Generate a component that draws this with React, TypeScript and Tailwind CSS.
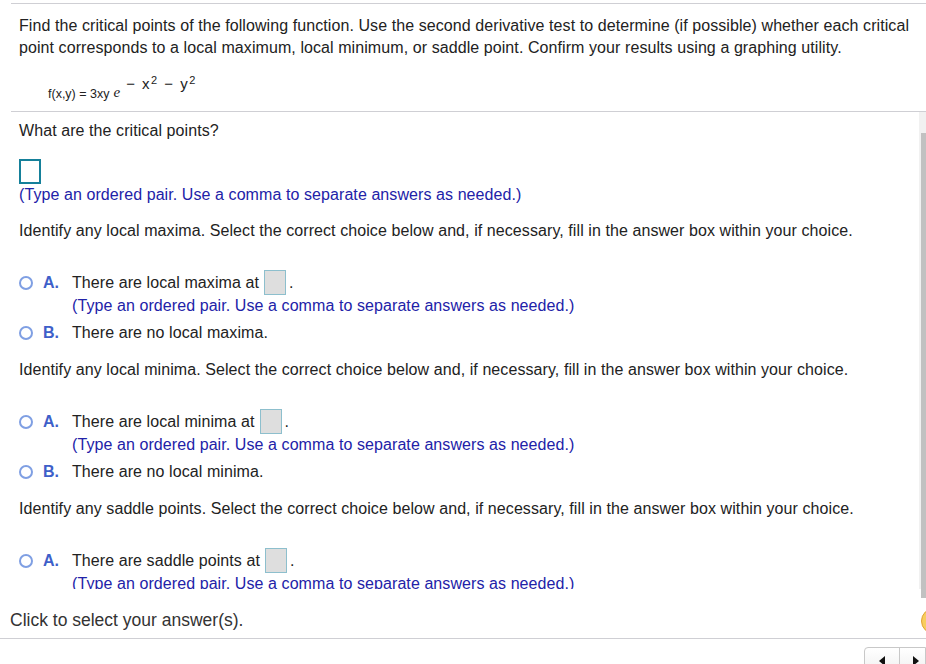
const blue = "text-[#2222a8]";
const body = "text-[16px] leading-[22px] tracking-[0.08px] text-[#222]";

const Radio = () => (
  <span className="inline-block h-[14px] w-[14px] shrink-0 rounded-full border-2 border-[#7f9fe3] bg-white" />
);

const AnswerBox = () => (
  <span className="ml-[5px] mr-[3px] inline-block h-[25px] w-[22px] border border-[#8dbfcd] bg-[#dedede] align-middle" />
);

const Choice = ({
  letter,
  text,
  box = false,
}: {
  letter: string;
  text: string;
  box?: boolean;
}) => (
  <div className="flex items-start">
    <div className="flex h-[25px] w-[53px] items-center gap-[10px]">
      <Radio />
      <span className="text-[16px] font-bold text-[#3e5fc9]">{letter}</span>
    </div>
    <div>
      <div className="flex h-[25px] items-center text-[16px] tracking-[0.08px] text-[#222]">
        {text}
        {box ? (
          <>
            <AnswerBox />
            <span>.</span>
          </>
        ) : (
          "."
        )}
      </div>
      {box && (
        <div className={`text-[16px] leading-[22px] tracking-[0.08px] ${blue}`}>
          (Type an ordered pair. Use a comma to separate answers as needed.)
        </div>
      )}
    </div>
  </div>
);

const Part = ({ what }: { what: string }) => (
  <div>
    <div className={body}>
      Identify any {what}. Select the correct choice below and, if necessary,
      fill in the answer box within your choice.
    </div>
    <div className="mt-[28px] flex flex-col gap-[3px]">
      <Choice letter="A." text={`There are ${what} at`} box />
      <Choice letter="B." text={`There are no ${what}`} />
    </div>
  </div>
);

export default function App() {
  return (
    <div
      className="relative h-[664px] w-[926px] overflow-hidden bg-white"
      style={{ fontFamily: '"Liberation Sans", Arial, sans-serif' }}
    >
      {/* question header */}
      <div className="ml-[11px] mt-[3px] h-[109px] border-y border-[#cfcfd4] pl-[8px] pt-[11px]">
        <p className={body}>
          Find the critical points of the following function. Use the second
          derivative test to determine (if possible) whether each critical
          point corresponds to a local maximum, local minimum, or saddle point.
          Confirm your results using a graphing utility.
        </p>
        <div className="mt-[22px] flex items-end pl-[29px] text-[12.5px] text-[#222]">
          <span>f(x,y) = 3xy</span>
          <span
            className="ml-[4px] text-[15px] italic"
            style={{ fontFamily: '"Liberation Serif", "Times New Roman", serif' }}
          >
            e
          </span>
          <span className="relative -top-[8px] ml-[6px] text-[15px] tracking-[1.5px]">
            − x<sup className="text-[11px]">2</sup> − y
            <sup className="text-[11px]">2</sup>
          </span>
        </div>
      </div>

      {/* scroll area */}
      <div className="flex h-[477px]">
        <div className="flex-1 overflow-hidden pl-[19px] pt-[8px]">
          <div className={body}>What are the critical points?</div>
          <div className="mt-[17px] h-[25px] w-[22px] border-2 border-[#15809a]" />
          <div className={`text-[16px] leading-[22px] tracking-[0.08px] ${blue}`}>
            (Type an ordered pair. Use a comma to separate answers as needed.)
          </div>
          <div className="mt-[14px] flex flex-col gap-[14px]">
            <Part what="local maxima" />
            <Part what="local minima" />
            <Part what="saddle points" />
          </div>
        </div>
        {/* scrollbar */}
        <div className="w-[7px] bg-[#f1f1f1] pt-[21px]">
          <div className="ml-[2px] h-[465px] w-[5px] bg-[#c1c1c1]" />
        </div>
      </div>

      {/* footer */}
      <div className="flex h-[50px] items-center border-b border-[#cfcfd4] pl-[10px] pt-[14px]">
        <span className="flex-1 text-[17.5px] text-[#333]">
          Click to select your answer(s).
        </span>
        <span className="mr-[-21px] h-[26px] w-[26px] rounded-full border border-[#e0a232] bg-[#f8cd5e]" />
      </div>

      {/* nav buttons */}
      <div className="flex justify-end pt-[8px]">
        <div className="flex h-[30px] overflow-hidden rounded-tl-[4px] border border-[#c8c8c8] bg-gradient-to-b from-white to-[#eeeeee]">
          <div className="flex w-[35px] justify-center border-r border-[#c8c8c8] pt-[8px]">
            <span className="h-0 w-0 border-y-[5px] border-r-[6px] border-y-transparent border-r-[#111]" />
          </div>
          <div className="flex w-[25px] justify-end pr-[6px] pt-[8px]">
            <span className="h-0 w-0 border-y-[5px] border-l-[6px] border-y-transparent border-l-[#111]" />
          </div>
        </div>
      </div>
    </div>
  );
}
